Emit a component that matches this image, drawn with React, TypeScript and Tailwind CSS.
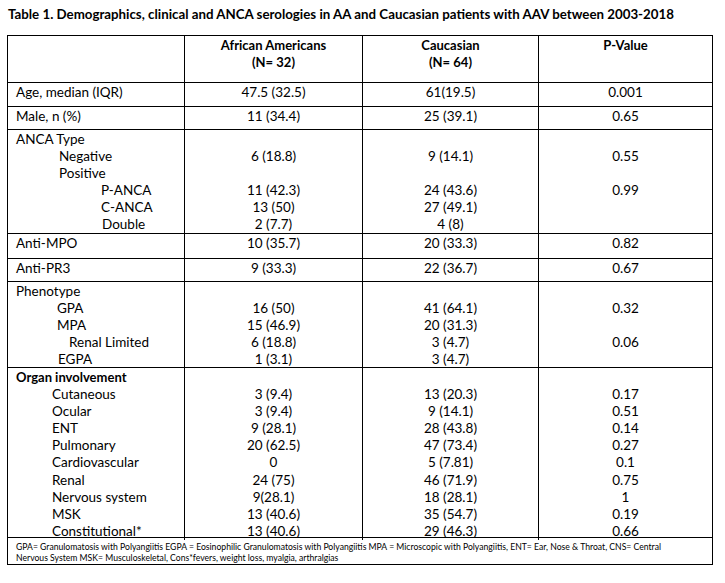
import React from "react";

type Line = { label: string; indent?: number; bold?: boolean };
type Block = {
  h: number;
  labels: Line[];
  c2: string[];
  c3: string[];
  c4: string[];
};

const blocks: Block[] = [
  { h: 24, labels: [{ label: "Age, median (IQR)" }], c2: ["47.5 (32.5)"], c3: ["61(19.5)"], c4: ["0.001"] },
  { h: 23, labels: [{ label: "Male, n (%)" }], c2: ["11 (34.4)"], c3: ["25 (39.1)"], c4: ["0.65"] },
  {
    h: 104,
    labels: [
      { label: "ANCA Type" },
      { label: "Negative", indent: 43 },
      { label: "Positive", indent: 43 },
      { label: "P-ANCA", indent: 85 },
      { label: "C-ANCA", indent: 85 },
      { label: "Double", indent: 86 },
    ],
    c2: ["", "6 (18.8)", "", "11 (42.3)", "13 (50)", "2 (7.7)"],
    c3: ["", "9 (14.1)", "", "24 (43.6)", "27 (49.1)", "4 (8)"],
    c4: ["", "0.55", "", "0.99", "", ""],
  },
  { h: 25, labels: [{ label: "Anti-MPO" }], c2: ["10 (35.7)"], c3: ["20 (33.3)"], c4: ["0.82"] },
  { h: 23, labels: [{ label: "Anti-PR3" }], c2: ["9 (33.3)"], c3: ["22 (36.7)"], c4: ["0.67"] },
  {
    h: 86,
    labels: [
      { label: "Phenotype" },
      { label: "GPA", indent: 41 },
      { label: "MPA", indent: 41 },
      { label: "Renal Limited", indent: 53 },
      { label: "EGPA", indent: 42 },
    ],
    c2: ["", "16 (50)", "15 (46.9)", "6 (18.8)", "1 (3.1)"],
    c3: ["", "41 (64.1)", "20 (31.3)", "3 (4.7)", "3 (4.7)"],
    c4: ["", "0.32", "", "0.06", ""],
  },
  {
    h: 170,
    labels: [
      { label: "Organ involvement", bold: true },
      { label: "Cutaneous", indent: 36 },
      { label: "Ocular", indent: 36 },
      { label: "ENT", indent: 36 },
      { label: "Pulmonary", indent: 36 },
      { label: "Cardiovascular", indent: 36 },
      { label: "Renal", indent: 36 },
      { label: "Nervous system", indent: 36 },
      { label: "MSK", indent: 36 },
      { label: "Constitutional*", indent: 36 },
    ],
    c2: ["", "3 (9.4)", "3 (9.4)", "9 (28.1)", "20 (62.5)", "0", "24 (75)", "9(28.1)", "13 (40.6)", "13 (40.6)"],
    c3: ["", "13 (20.3)", "9 (14.1)", "28 (43.8)", "47 (73.4)", "5 (7.81)", "46 (71.9)", "18 (28.1)", "35 (54.7)", "29 (46.3)"],
    c4: ["", "0.17", "0.51", "0.14", "0.27", "0.1", "0.75", "1", "0.19", "0.66"],
  },
];

const font = { fontFamily: "Lato, 'Open Sans', sans-serif" };

function ValueCol({ values, last }: { values: string[]; last?: boolean }) {
  return (
    <div className={`pt-[1px] ${last ? "" : "border-r border-black"}`}>
      {values.map((v, i) => (
        <div key={i} className="h-[17.1px] leading-[17.1px] text-center whitespace-nowrap">
          {v}
        </div>
      ))}
    </div>
  );
}

export default function App() {
  return (
    <div className="w-[725px] h-[583px] bg-white text-black overflow-hidden" style={font}>
      <div className="pl-[8px] pt-[6px] h-[35px] text-[13.3px] font-bold leading-[17px] whitespace-nowrap">
        Table 1. Demographics, clinical and ANCA serologies in AA and Caucasian patients with AAV between 2003-2018
      </div>
      <div className="ml-[7px] w-[706px] border border-black text-[13.5px]">
        <div className="grid grid-cols-[177px_178px_176px_173px] h-[47px] border-b border-black font-bold text-[13px]">
          <div className="border-r border-black" />
          <div className="border-r border-black pt-[1px] text-center leading-[17.1px]">
            <div>African Americans</div>
            <div>(N= 32)</div>
          </div>
          <div className="border-r border-black pt-[1px] text-center leading-[17.1px]">
            <div>Caucasian</div>
            <div>(N= 64)</div>
          </div>
          <div className="pt-[1px] text-center leading-[17.1px]">
            <div>P-Value</div>
          </div>
        </div>
        {blocks.map((b, bi) => (
          <div
            key={bi}
            className="grid grid-cols-[177px_178px_176px_173px] border-b border-black"
            style={{ height: b.h }}
          >
            <div className="border-r border-black pt-[1px] pl-[8px]">
              {b.labels.map((l, i) => (
                <div
                  key={i}
                  className={`h-[17.1px] leading-[17.1px] whitespace-nowrap ${l.bold ? "font-bold text-[13px]" : ""}`}
                  style={l.indent ? { paddingLeft: l.indent } : undefined}
                >
                  {l.label}
                </div>
              ))}
            </div>
            <ValueCol values={b.c2} />
            <ValueCol values={b.c3} />
            <ValueCol values={b.c4} last />
          </div>
        ))}
        <div className="h-[26px] pl-[8px] pt-[3px] text-[8.65px] leading-[11px] whitespace-nowrap">
          GPA= Granulomatosis with Polyangiitis EGPA = Eosinophilic Granulomatosis with Polyangiitis MPA = Microscopic with Polyangiitis, ENT= Ear, Nose &amp; Throat, CNS= Central
          <br />
          Nervous System MSK= Musculoskeletal, Cons*fevers, weight loss, myalgia, arthralgias
        </div>
      </div>
    </div>
  );
}
